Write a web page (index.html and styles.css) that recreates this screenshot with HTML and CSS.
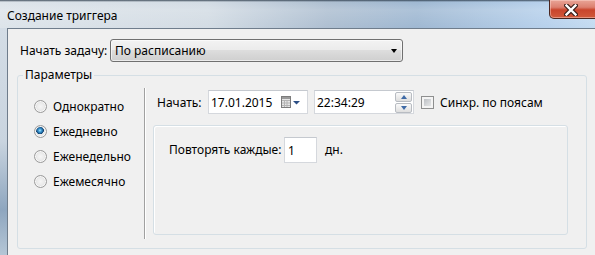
FILE: index.html
```html
<!DOCTYPE html>
<html lang="ru">
<head>
<meta charset="UTF-8" />
<meta name="viewport" content="width=device-width, initial-scale=1" />
<title>Создание триггера</title>
<link rel="stylesheet" href="styles.css">
</head>
<body>
<div class="window">
  <div class="titlebar">
    <span class="title">Создание триггера</span>
    <span class="close-btn">
      <svg width="14" height="12" viewBox="0 0 14 12">
        <path d="M2.5 1.5 L11.5 10.5 M11.5 1.5 L2.5 10.5" stroke="#3b1f1a" stroke-width="4.6" stroke-linecap="square" fill="none"/>
        <path d="M2.5 1.5 L11.5 10.5 M11.5 1.5 L2.5 10.5" stroke="#ffffff" stroke-width="2.4" stroke-linecap="square" fill="none"/>
      </svg>
    </span>
  </div>

  <div class="frame">
    <div class="frame-edge"></div>
    <div class="client">
      <div class="task-row">
        <span class="task-label">Начать задачу:</span>
        <div class="combo">
          <span>По расписанию</span>
          <span class="combo-arrow"></span>
        </div>
      </div>

      <fieldset class="params">
        <legend>Параметры</legend>
        <div class="params-body">
          <div class="freq">
            <div class="radio-item"><span class="radio"></span>Однократно</div>
            <div class="radio-item"><span class="radio checked"></span>Ежедневно</div>
            <div class="radio-item"><span class="radio"></span>Еженедельно</div>
            <div class="radio-item"><span class="radio"></span>Ежемесячно</div>
          </div>

          <div class="separator"></div>

          <div class="detail">
            <div class="start-row">
              <span class="start-label">Начать:</span>
              <div class="field date-field">
                <span>17.01.2015</span>
                <svg class="cal-icon" width="20" height="12" viewBox="0 0 20 12">
                  <rect x="0.5" y="0.5" width="9" height="11" fill="#e6e6e6" stroke="#7c7c7c"/>
                  <path d="M1 4.5 H9 M1 7 H9 M1 9.5 H9 M3.5 4 V11 M6 4 V11" stroke="#b4b4b4" stroke-width="1" fill="none"/>
                  <rect x="1" y="1" width="8" height="2" fill="#9a9a9a"/>
                  <polygon points="12,5 19,5 15.5,8.5" fill="#2c4f85"/>
                </svg>
              </div>
              <div class="field time-field">
                <span>22:34:29</span>
                <div class="spinner">
                  <span class="spin-btn"><span class="tri-up"></span></span>
                  <span class="spin-btn"><span class="tri-down"></span></span>
                </div>
              </div>
              <span class="checkbox"></span>
              <span class="check-label">Синхр. по поясам</span>
            </div>

            <div class="repeat-panel">
              <span class="repeat-label">Повторять каждые:</span>
              <div class="field days-field">1</div>
              <span class="days-unit">дн.</span>
            </div>
          </div>
        </div>
      </fieldset>
    </div>
  </div>
</div>
</body>
</html>
```

FILE: styles.css
```css
body {
  margin: 0;
  font-family: 'Noto Sans', 'Open Sans', sans-serif;
  font-size: 12px;
  color: #000;
  background: #f0f0f0;
}
.window {
  width: 595px;
  height: 255px;
  overflow: hidden;
  display: flex;
  flex-direction: column;
}

/* title bar */
.titlebar {
  height: 28px;
  flex: none;
  display: flex;
  align-items: flex-start;
  background:
    linear-gradient(180deg, rgba(40,55,70,0.85) 0, rgba(40,55,70,0) 2px, rgba(255,255,255,0.15) 10px, rgba(255,255,255,0) 28px),
    linear-gradient(90deg, #dde4ea 0%, #d3dce4 35%, #aebfd1 55%, #9fb8d2 70%, #b7d1ec 92%, #c4dbf1 100%);
}
.title {
  padding: 8px 0 0 7px;
  line-height: 16px;
  color: #000;
}
.close-btn {
  margin-left: auto;
  margin-right: -3px;
  width: 47px;
  height: 18px;
  border: 1px solid #4a2620;
  border-top: none;
  border-radius: 0 0 0 5px;
  background: linear-gradient(180deg, #e9a597 0%, #dc8070 40%, #c9452c 55%, #d15a3c 100%);
  box-shadow: inset 0 0 0 1px rgba(255,220,210,0.45);
  display: flex;
  align-items: center;
  justify-content: center;
}
.close-btn svg {
  margin-left: -6px;
  margin-top: 1px;
}

/* frame + client */
.frame {
  flex: 1;
  display: flex;
}
.frame-edge {
  width: 7px;
  flex: none;
  background: linear-gradient(180deg, #d4dde6 0%, #c9d4df 50%, #8ea6bf 80%, #b5c6d6 100%);
}
.client {
  flex: 1;
  background: #f0f0f0;
  border-left: 1px solid #6f7d8c;
  border-top: 1px solid #6f7d8c;
  padding: 10px 0 0 9px;
}

.task-row {
  display: flex;
  align-items: center;
  height: 23px;
  padding-left: 3px;
}
.task-label {
  width: 90px;
}
.combo {
  box-sizing: border-box;
  width: 293px;
  height: 23px;
  border: 1px solid #707070;
  border-radius: 3px;
  background: linear-gradient(180deg, #f3f3f3 0%, #ebebeb 50%, #dddddd 50%, #cfcfcf 100%);
  box-shadow: inset 0 0 0 1px rgba(255,255,255,0.6);
  display: flex;
  align-items: center;
  padding-left: 4px;
}
.combo-arrow {
  margin-left: auto;
  margin-right: 5px;
  width: 0;
  height: 0;
  border-left: 3.5px solid transparent;
  border-right: 3.5px solid transparent;
  border-top: 4px solid #000;
}

/* group box */
.params {
  width: 570px;
  box-sizing: border-box;
  margin: 5px 0 0 0;
  padding: 0;
  border: 1px solid #d5dfe5;
  border-radius: 3px;
}
.params legend {
  margin-left: 5px;
  padding: 0 2px;
  line-height: 16px;
}
.params-body {
  display: flex;
}
.freq {
  width: 126px;
  flex: none;
  padding: 11px 0 0 16px;
  box-sizing: border-box;
}
.radio-item {
  height: 25px;
  display: flex;
  align-items: center;
  gap: 6px;
}
.radio {
  box-sizing: border-box;
  width: 13px;
  height: 13px;
  border-radius: 50%;
  border: 1px solid #9a9a9a;
  background: radial-gradient(circle at 50% 50%, #f5f5f5 0, #ececec 40%, #cfcfcf 100%);
  box-shadow: inset 0 0 0 1px #f8f8f8;
}
.radio.checked {
  background:
    radial-gradient(circle at 45% 40%, #b5e8fb 0, #47a6de 1.3px, #1d5f97 3px, #0f3f6b 3.6px, transparent 4.1px),
    radial-gradient(circle at 50% 50%, #f5f5f5 0, #ececec 40%, #cfcfcf 100%);
}
.separator {
  width: 1px;
  flex: none;
  background: #a0a0a0;
  border-right: 1px solid #ffffff;
  margin: 5px 0 9px 0;
}

.detail {
  flex: 1;
  padding: 7px 18px 13px 7px;
}
.start-row {
  display: flex;
  align-items: center;
  height: 24px;
  padding-left: 4px;
}
.start-label {
  width: 51px;
}
.field {
  box-sizing: border-box;
  background: #fff;
  border: 1px solid #d5d8dd;
  border-top-color: #c5c9cf;
  display: flex;
  align-items: center;
}
.date-field {
  width: 100px;
  height: 24px;
  padding-left: 2px;
}
.cal-icon {
  margin-left: auto;
  margin-right: 6px;
}
.time-field {
  width: 100px;
  height: 24px;
  margin-left: 6px;
  padding-left: 2px;
}
.spinner {
  margin-left: auto;
  margin-right: 1px;
  display: flex;
  flex-direction: column;
  gap: 1px;
}
.spin-btn {
  box-sizing: border-box;
  width: 17px;
  height: 10px;
  border: 1px solid #b8bcc2;
  border-radius: 2px;
  background: linear-gradient(180deg, #fafafa 0%, #ececec 50%, #dedede 100%);
  display: flex;
  align-items: center;
  justify-content: center;
}
.tri-up, .tri-down {
  width: 0;
  height: 0;
  border-left: 3.5px solid transparent;
  border-right: 3.5px solid transparent;
}
.tri-up {
  border-bottom: 4px solid #3e6aa6;
}
.tri-down {
  border-top: 4px solid #3e6aa6;
}
.checkbox {
  box-sizing: border-box;
  width: 13px;
  height: 13px;
  margin-left: 7px;
  border: 1px solid #8e8f8f;
  background: linear-gradient(135deg, #b0b4ba 0%, #d8dadc 60%, #ececec 100%);
  box-shadow: inset 0 0 0 2px #f4f4f4;
}
.check-label {
  margin-left: 6px;
}

.repeat-panel {
  margin-top: 11px;
  height: 110px;
  box-sizing: border-box;
  border: 1px solid #d5dfe5;
  border-radius: 3px;
  box-shadow: inset 1px 1px 0 #ffffff;
  display: flex;
  align-items: flex-start;
  padding: 11px 0 0 15px;
}
.repeat-label {
  width: 115px;
  line-height: 26px;
}
.days-field {
  width: 33px;
  height: 26px;
  padding-left: 3px;
}
.days-unit {
  margin-left: 8px;
  line-height: 26px;
}
```
